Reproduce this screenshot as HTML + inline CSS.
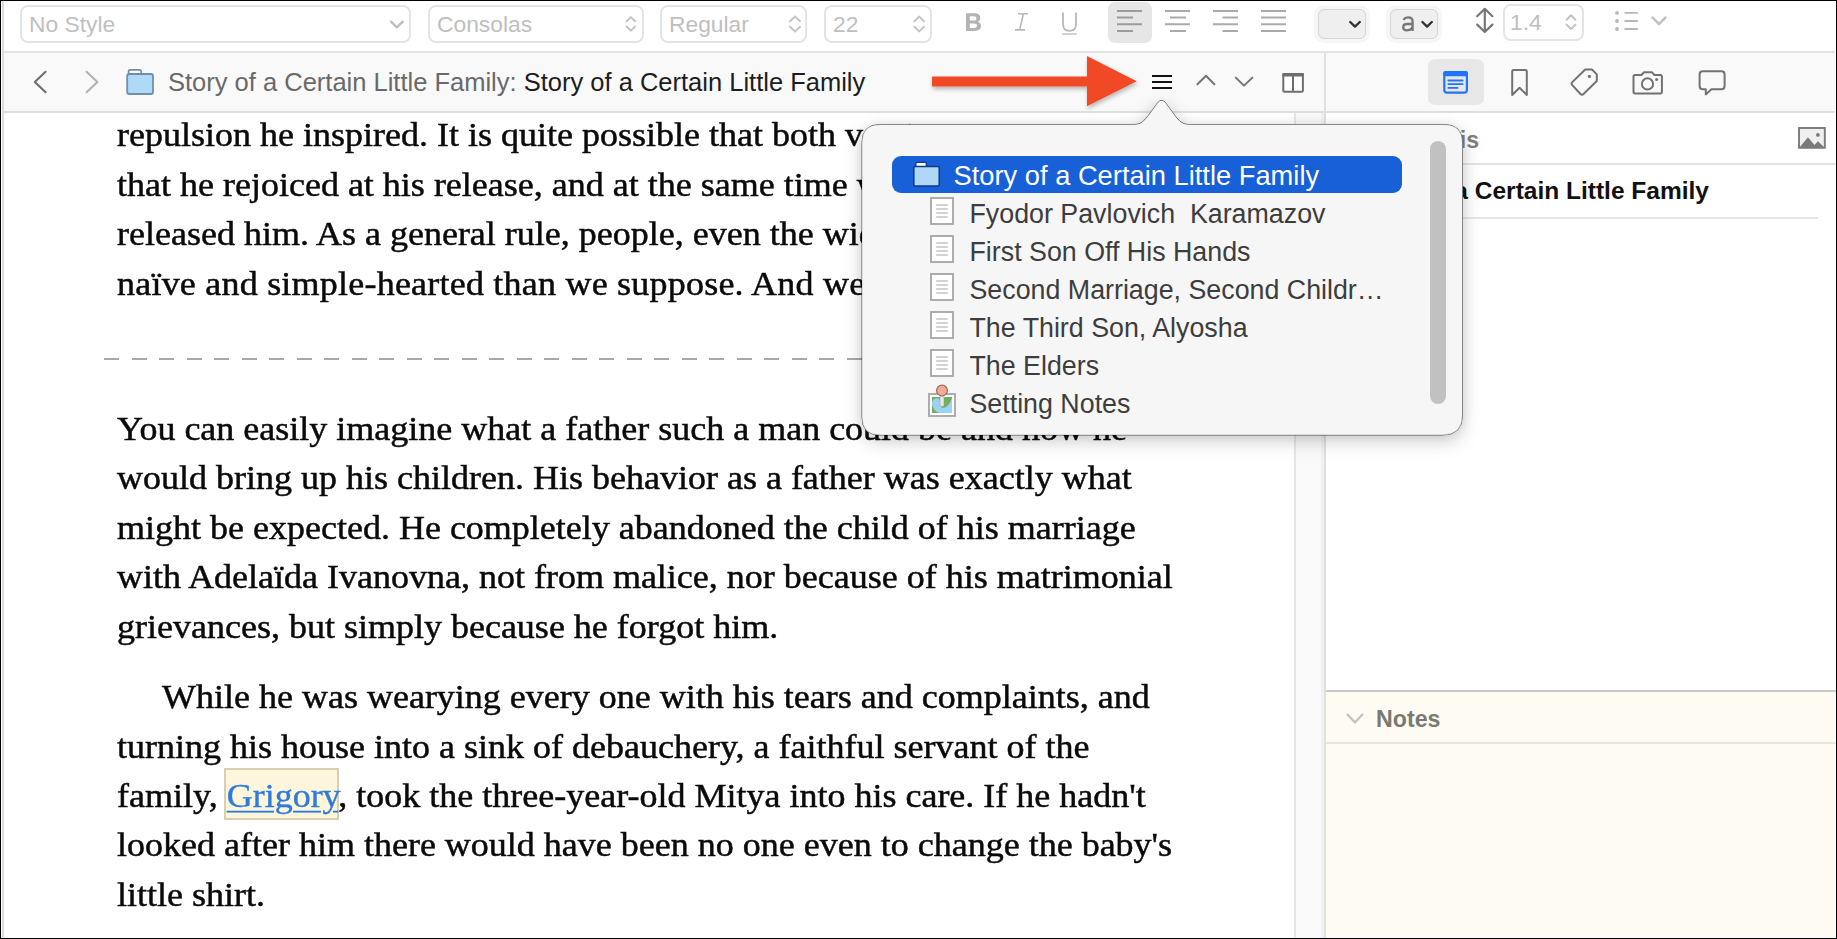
<!DOCTYPE html>
<html><head><meta charset="utf-8"><style>
*{box-sizing:border-box;margin:0;padding:0}
html,body{width:1837px;height:939px;overflow:hidden;background:#000;position:relative;font-family:"Liberation Sans",sans-serif}
.a{position:absolute}
.box{position:absolute;border:2px solid #e4e4e4;border-radius:8px;background:#fff}
.ph{position:absolute;font-size:22.8px;color:#bfbfbf;white-space:pre;line-height:1}
.ln{position:absolute;left:117px;font-family:"Liberation Serif",serif;font-size:36px;color:#0a0a0a;white-space:pre;line-height:1;transform:scaleY(0.93);transform-origin:0 30px;-webkit-text-stroke:0.5px #0a0a0a}
.pi{position:absolute;left:969.5px;font-size:26.8px;color:#3d3d3d;white-space:pre;line-height:1}
svg{position:absolute;overflow:visible;left:0;top:0}
</style></head><body>
<!-- window -->
<div class="a" style="left:1px;top:1px;width:1835px;height:937px;background:#fff"></div>
<div class="a" style="left:2px;top:1px;width:2px;height:937px;background:#dcdcdc"></div>

<!-- ===== TOOLBAR ===== -->
<div class="a" style="left:4px;top:51px;width:1831px;height:2px;background:#e3e3e3"></div>
<div class="box" style="left:20px;top:5px;width:391px;height:38px"></div>
<div class="ph" style="left:29px;top:12.5px">No Style</div>
<div class="box" style="left:428px;top:5px;width:216px;height:38px"></div>
<div class="ph" style="left:437px;top:12.5px">Consolas</div>
<div class="box" style="left:660px;top:5px;width:147px;height:38px"></div>
<div class="ph" style="left:669px;top:12.5px">Regular</div>
<div class="box" style="left:824px;top:5px;width:108px;height:38px"></div>
<div class="ph" style="left:833px;top:12.5px">22</div>
<!-- highlight align-left -->
<div class="a" style="left:1108px;top:2px;width:44px;height:41px;background:#e6e6e6;border-radius:7px"></div>
<!-- colour + 'a' halos -->
<div class="a" style="left:1314px;top:5px;width:56px;height:38px;background:#f6f6f6;border-radius:10px"></div>
<div class="a" style="left:1318px;top:9px;width:48px;height:30px;background:#efefef;border:1.5px solid #d5d5d5;border-radius:6px"></div>
<div class="a" style="left:1386px;top:5px;width:56px;height:38px;background:#f6f6f6;border-radius:10px"></div>
<div class="a" style="left:1390px;top:9px;width:48px;height:30px;background:#efefef;border:1.5px solid #d5d5d5;border-radius:6px"></div>

<div class="box" style="left:1503px;top:3.5px;width:81px;height:37px"></div>
<div class="ph" style="left:1510px;top:10.5px">1.4</div>
<svg width="1837" height="60" style="width:1837px;height:60px">
 <g fill="none" stroke-linecap="round" stroke-linejoin="round">
  <path d="M391 21.6 L396.8 27.4 L402.8 21.6" stroke="#bdbdbd" stroke-width="2.3"/>
  <path d="M626.6 21.2 L630.9 17.1 L635.1 21.2 M626.6 26.5 L630.9 30.6 L635.1 26.5" stroke="#c4c4c4" stroke-width="2"/>
  <path d="M790 21.2 L795 16.6 L800 21.2 M790 26.8 L795 31.4 L800 26.8" stroke="#c4c4c4" stroke-width="2"/>
  <path d="M914.4 21.2 L919.2 16.6 L924 21.2 M914.4 26.8 L919.2 31.4 L924 26.8" stroke="#c4c4c4" stroke-width="2"/>
  <path d="M1566.6 19.8 L1571 15.3 L1575.4 19.8 M1566.6 24.6 L1571 29 L1575.4 24.6" stroke="#c4c4c4" stroke-width="2"/>
  <!-- I -->
  <path d="M1018 13.8 H1028 M1015 29.9 H1025 M1023.3 13.8 L1019.7 29.9" stroke="#b8b8b8" stroke-width="1.6" stroke-linecap="butt"/>
  <!-- U -->
  <path d="M1063 12.4 V24 Q1063 30.8 1069.5 30.8 Q1076 30.8 1076 24 V12.4" stroke="#b8b8b8" stroke-width="1.8" stroke-linecap="butt"/>
  <path d="M1062.2 34 H1076.7" stroke="#c2c2c2" stroke-width="1.5" stroke-linecap="butt"/>
  <!-- align -->
  <path d="M1117 11 H1142 M1117 17.6 H1133 M1117 24.3 H1142 M1117 31 H1133" stroke="#9c9c9c" stroke-width="2" stroke-linecap="butt"/>
  <path d="M1165 11 H1190 M1170 17.6 H1186 M1165 24.3 H1190 M1170 31 H1186" stroke="#aaaaaa" stroke-width="2" stroke-linecap="butt"/>
  <path d="M1213 11 H1238 M1222.5 17.6 H1238 M1213 24.3 H1238 M1222.5 31 H1238" stroke="#aaaaaa" stroke-width="2" stroke-linecap="butt"/>
  <path d="M1261 11 H1286 M1261 17.6 H1286 M1261 24.3 H1286 M1261 31 H1286" stroke="#aaaaaa" stroke-width="2" stroke-linecap="butt"/>
  <!-- dropdown chevrons dark -->
  <path d="M1350.2 22 L1355 26.6 L1359.8 22" stroke="#333" stroke-width="2.4"/>
  <path d="M1422.4 22 L1427.1 26.6 L1431.8 22" stroke="#333" stroke-width="2.4"/>
  <path d="M1403.4 19.8 Q1405 17.4 1407.9 17.4 Q1412.6 17.4 1412.6 21.6 V30.9 M1412.6 24 H1407.2 Q1403.2 24 1403.2 27.3 Q1403.2 30.3 1406.7 30.3 Q1412.6 30.3 1412.6 25.6" stroke="#767676" stroke-width="2.3" stroke-linecap="butt"/>
  <!-- line spacing arrow -->
  <path d="M1484.8 9 V32 M1477.2 16.2 L1484.8 8.8 L1492.4 16.2 M1477.2 24.6 L1484.8 32 L1492.4 24.6" stroke="#777" stroke-width="2.2"/>
  <!-- list -->
  <path d="M1624.5 12.9 H1637.8 M1624.5 21 H1637.8 M1624.5 29 H1637.8" stroke="#b8b8b8" stroke-width="1.8" stroke-linecap="butt"/>
  <path d="M1652.6 17.6 L1659 24 L1665.4 17.6" stroke="#c2c2c2" stroke-width="2.5"/>
 </g>
 <g fill="#b8b8b8"><circle cx="1617" cy="12.9" r="1.9"/><circle cx="1617" cy="21" r="1.9"/><circle cx="1617" cy="29" r="1.9"/></g>
 <!-- B -->
 <path fill="#b4b4b4" fill-rule="evenodd" d="M966 13.2 H974.2 Q980.3 13.2 980.3 17.8 Q980.3 20.9 977.6 21.8 Q981 22.7 981 26.3 Q981 30.9 974.6 30.9 H966 Z M969.8 16.2 V20.6 H973.6 Q976.4 20.6 976.4 18.4 Q976.4 16.2 973.6 16.2 Z M969.8 23.4 V27.9 H974 Q977 27.9 977 25.6 Q977 23.4 974 23.4 Z"/>
</svg>

<!-- ===== NAV BAR ===== -->
<div class="a" style="left:4px;top:53px;width:1831px;height:58px;background:#f9f9f9"></div>
<div class="a" style="left:4px;top:111px;width:1831px;height:2px;background:#dedede"></div>
<div class="a" style="left:168px;top:69.5px;font-size:25.5px;color:#696969;white-space:pre;line-height:1">Story of a Certain Little Family: <span style="color:#1d1d1d">Story of a Certain Little Family</span></div>
<!-- inspector tab highlight -->
<div class="a" style="left:1428px;top:59px;width:56px;height:46px;background:#e7e7e7;border-radius:7px"></div>
<svg width="1837" height="120" style="width:1837px;height:120px">
 <g fill="none" stroke-linecap="round" stroke-linejoin="round">
  <path d="M45.6 71.8 L34.8 81.9 L45.6 92.2" stroke="#6e6e6e" stroke-width="2.1"/>
  <path d="M86.6 71.8 L97.4 81.9 L86.6 92.2" stroke="#b2b2b2" stroke-width="2.1"/>
  <path d="M1197.4 84.2 L1206 75.8 L1214.4 84.2" stroke="#747474" stroke-width="2"/>
  <path d="M1235.8 77.6 L1244 85.6 L1252.4 77.6" stroke="#747474" stroke-width="2"/>
 </g>
 <!-- folder -->
 <path d="M128.6 73.8 V71.5 Q128.6 69.8 130.3 69.8 H139.4 Q141.2 69.8 141.2 71.5 V73.8" fill="#fff" stroke="#6f8fa8" stroke-width="1.7"/>
 <rect x="127.2" y="74" width="25.8" height="20" rx="2" fill="#afd9f6" stroke="#6f8fa8" stroke-width="1.8"/>
 <!-- split -->
 <rect x="1283.3" y="74" width="19.6" height="17.8" rx="1.3" fill="#fff" stroke="#6e6e6e" stroke-width="2"/>
 <rect x="1282.3" y="73" width="21.6" height="3.6" rx="1" fill="#6e6e6e"/>
 <path d="M1293 75 V91" stroke="#6e6e6e" stroke-width="2"/>
 <!-- hamburger -->
 <path d="M1152 76 H1172 M1152 82 H1172 M1152 88 H1172" stroke="#111" stroke-width="2.2"/>
 <!-- synopsis icon -->
 <rect x="1444.3" y="72.1" width="22.6" height="20.6" rx="2.6" fill="none" stroke="#1f74fb" stroke-width="2.2"/>
 <rect x="1443.2" y="71" width="24.8" height="5.2" rx="2" fill="#1f74fb"/>
 <path d="M1448.3 80.5 H1462.7 M1448.3 84.1 H1462.7 M1448.3 87.9 H1457.6" stroke="#1f74fb" stroke-width="1.8" stroke-linecap="round"/>
 <g fill="none" stroke="#727272" stroke-width="2" stroke-linejoin="round" stroke-linecap="round">
  <!-- bookmark -->
  <path d="M1512.2 95 V71.5 Q1512.2 70 1513.7 70 H1525.3 Q1526.8 70 1526.8 71.5 V95 L1519.5 87.8 Z"/>
  <!-- tag -->
  <path d="M1572.3 85.1 Q1570.8 83.6 1572.3 82.1 L1585.2 69.5 H1592 L1596.8 74.4 V81 L1583.5 94 Q1582 95.5 1580.5 94 Z"/>
  <!-- camera -->
  <path d="M1633.5 76.6 Q1633.5 75 1635.1 75 H1641.5 L1643.9 72.3 H1652 L1654.4 75 H1660.3 Q1661.9 75 1661.9 76.6 V91.8 Q1661.9 93.4 1660.3 93.4 H1635.1 Q1633.5 93.4 1633.5 91.8 Z"/>
  <circle cx="1647.5" cy="83.9" r="5.6"/>
  <!-- comment -->
  <path d="M1699.6 74.5 Q1699.6 71.3 1702.8 71.3 H1721.4 Q1724.6 71.3 1724.6 74.5 V86 Q1724.6 89.2 1721.4 89.2 H1711.4 L1705.8 94.4 V89.2 H1702.8 Q1699.6 89.2 1699.6 86 Z"/>
 </g>
 <circle cx="1589.4" cy="76.4" r="1.6" fill="#727272"/>
 <circle cx="1656.6" cy="79.4" r="1.5" fill="#727272"/>
</svg>

<!-- ===== EDITOR ===== -->
<div class="a" style="left:1294px;top:113px;width:30px;height:825px;background:linear-gradient(90deg,#e6e6e6 0 1.5px,#f9f9f9 1.5px 27px,#f1f1f1 27px)"></div>
<div class="a" style="left:1324px;top:53px;width:2px;height:885px;background:#e0e0e0"></div>

<div class="ln" style="top:116px">repulsion he inspired. It is quite possible that both versions were true,</div>
<div class="ln" style="top:165.5px">that he rejoiced at his release, and at the same time wept for her who</div>
<div class="ln" style="top:215px">released him. As a general rule, people, even the wicked, are much more</div>
<div class="ln" style="top:264.5px;letter-spacing:0.22px">naïve and simple-hearted than we suppose. And we ourselves are too.</div>
<div class="a" style="left:104px;top:358px;width:1170px;height:2px;background:repeating-linear-gradient(90deg,#a8a8a8 0 15px,transparent 15px 27.5px)"></div>
<div class="ln" style="top:409.6px">You can easily imagine what a father such a man could be and how he</div>
<div class="ln" style="top:459px">would bring up his children. His behavior as a father was exactly what</div>
<div class="ln" style="top:508.6px">might be expected. He completely abandoned the child of his marriage</div>
<div class="ln" style="top:558px">with Adelaïda Ivanovna, not from malice, nor because of his matrimonial</div>
<div class="ln" style="top:607.6px">grievances, but simply because he forgot him.</div>
<div class="ln" style="top:678px;left:162px">While he was wearying every one with his tears and complaints, and</div>
<div class="ln" style="top:727.5px">turning his house into a sink of debauchery, a faithful servant of the</div>
<div class="a" style="left:224px;top:767.5px;width:115px;height:52px;background:#fdf5dc;border:2px solid #d8cfb3"></div>
<div class="ln" style="top:777px">family, <span style="color:#2f7bd9;-webkit-text-stroke:0.4px #2f7bd9;text-decoration:underline;text-decoration-thickness:1.5px;text-underline-offset:4px">Grigory</span>, took the three-year-old Mitya into his care. If he hadn't</div>
<div class="ln" style="top:826px">looked after him there would have been no one even to change the baby's</div>
<div class="ln" style="top:875.8px">little shirt.</div>

<!-- ===== INSPECTOR ===== -->
<div class="a" style="left:1326px;top:163px;width:510px;height:2px;background:#e3e3e3"></div>
<div class="a" style="left:1376px;top:128.5px;font-size:23.2px;font-weight:bold;color:#7e7e7e;line-height:1">Synopsis</div>
<svg width="1837" height="160" style="width:1837px;height:160px">
 <rect x="1799" y="128" width="25.8" height="19.8" fill="#f0f0f0" stroke="#7a7a7a" stroke-width="1.9"/>
 <path d="M1800 147 L1807.9 137.3 L1814.5 144.9 L1817.9 141.3 L1824 147 Z" fill="#7a7a7a"/>
 <circle cx="1817.9" cy="134.9" r="1.9" fill="#7a7a7a"/>
</svg>
<div class="a" style="left:1355px;top:179px;font-size:24.5px;font-weight:bold;color:#111;line-height:1;white-space:pre">Story of a Certain Little Family</div>
<div class="a" style="left:1347px;top:217px;width:471px;height:2px;background:#e6e6e6"></div>
<div class="a" style="left:1326px;top:690px;width:510px;height:248px;background:#fefcf2"></div>
<div class="a" style="left:1326px;top:690px;width:510px;height:2px;background:#c9c9c9"></div>
<div class="a" style="left:1326px;top:742px;width:510px;height:2px;background:#e6e4dc"></div>
<div class="a" style="left:1376px;top:707.5px;font-size:23.2px;font-weight:bold;color:#797975;line-height:1">Notes</div>
<svg width="1837" height="939" style="width:1837px;height:939px">
 <path d="M1347.5 714.6 L1355 722.4 L1362.4 714.6" fill="none" stroke="#c0c0c0" stroke-width="2.2" stroke-linecap="round" stroke-linejoin="round"/>
</svg>

<!-- ===== POPOVER ===== -->
<svg width="1837" height="939" style="width:1837px;height:939px">
 <defs><filter id="sh" x="-20%" y="-40%" width="140%" height="180%"><feDropShadow in="SourceAlpha" dx="0" dy="6" stdDeviation="9" flood-color="#000" flood-opacity="0.2" result="s1"/><feDropShadow in="SourceAlpha" dx="0" dy="0" stdDeviation="6" flood-color="#000" flood-opacity="0.07" result="s2"/><feMerge><feMergeNode in="s1"/><feMergeNode in="s2"/><feMergeNode in="SourceGraphic"/></feMerge></filter></defs>
 <path filter="url(#sh)" d="M880 124.5 H1134.5 C1141.5 124.5 1145.5 119.5 1149.5 114 L1157.8 102.6 Q1161.6 98.2 1165.4 102.6 L1173.7 114 C1177.7 119.5 1181.7 124.5 1188.7 124.5 H1444 Q1462.5 124.5 1462.5 143 V415 Q1462.5 435 1442.5 435 H880 Q862 435 862 417 V142.5 Q862 124.5 880 124.5 Z" fill="#f6f6f6" stroke="rgba(0,0,0,0.22)" stroke-width="1"/>
 <rect x="892" y="156" width="510" height="37" rx="9" fill="#1760d8"/>
 <!-- folder selected -->
 <path d="M915.8 166 V163.6 Q915.8 162.4 917 162.4 H925.2 Q926.4 162.4 926.4 163.6 V166" fill="#fff" stroke="#0b3a86" stroke-width="1.4"/>
 <rect x="913.8" y="166.4" width="25.4" height="19.6" rx="1.2" fill="#aed8f6" stroke="#0b3a86" stroke-width="1.5"/>
<g transform="translate(0 0)"><rect x="931" y="198" width="22" height="26" fill="#fff" stroke="#a9a9a9" stroke-width="1.9"/><path d="M936.2 205 H947.8 M936.2 209 H947.8 M936.2 213 H947.8 M936.2 217 H947.8" stroke="#c4c4c4" stroke-width="1.7"/></g><g transform="translate(0 38)"><rect x="931" y="198" width="22" height="26" fill="#fff" stroke="#a9a9a9" stroke-width="1.9"/><path d="M936.2 205 H947.8 M936.2 209 H947.8 M936.2 213 H947.8 M936.2 217 H947.8" stroke="#c4c4c4" stroke-width="1.7"/></g><g transform="translate(0 76)"><rect x="931" y="198" width="22" height="26" fill="#fff" stroke="#a9a9a9" stroke-width="1.9"/><path d="M936.2 205 H947.8 M936.2 209 H947.8 M936.2 213 H947.8 M936.2 217 H947.8" stroke="#c4c4c4" stroke-width="1.7"/></g><g transform="translate(0 114)"><rect x="931" y="198" width="22" height="26" fill="#fff" stroke="#a9a9a9" stroke-width="1.9"/><path d="M936.2 205 H947.8 M936.2 209 H947.8 M936.2 213 H947.8 M936.2 217 H947.8" stroke="#c4c4c4" stroke-width="1.7"/></g><g transform="translate(0 152)"><rect x="931" y="198" width="22" height="26" fill="#fff" stroke="#a9a9a9" stroke-width="1.9"/><path d="M936.2 205 H947.8 M936.2 209 H947.8 M936.2 213 H947.8 M936.2 217 H947.8" stroke="#c4c4c4" stroke-width="1.7"/></g>
 <!-- setting notes -->
 <rect x="929" y="394" width="26" height="22" fill="#fff" stroke="#a9a9a9" stroke-width="1.9"/>
 <rect x="932" y="397" width="20" height="16" fill="#6fb05a"/>
 <path d="M932 402 Q934 397.5 938 398.5 Q941 399.5 941 405 Q941 409 945 407.5 Q950 405 952 397.5 V413 H940 Q932 411 932 402 Z" fill="#9dd2f7"/>
 <rect x="940" y="396" width="4" height="10.5" rx="1.5" fill="#e8e8e8" stroke="#9a9a9a" stroke-width=".6"/>
 <circle cx="942" cy="390.6" r="5.4" fill="#f3aa92" stroke="#9c6a62" stroke-width="1.2"/>
 <rect x="1430" y="141" width="16" height="263" rx="8" fill="#c1c1c1"/>
</svg>
<div class="a" style="left:953.5px;top:161.5px;font-size:27.3px;color:#fff;white-space:pre;line-height:1">Story of a Certain Little Family</div>
<div class="pi" style="top:201px">Fyodor Pavlovich  Karamazov</div>
<div class="pi" style="top:239px">First Son Off His Hands</div>
<div class="pi" style="top:277px">Second Marriage, Second Childr…</div>
<div class="pi" style="top:315px">The Third Son, Alyosha</div>
<div class="pi" style="top:353px">The Elders</div>
<div class="pi" style="top:391px">Setting Notes</div>

<!-- red arrow -->
<svg width="1837" height="120" style="width:1837px;height:120px">
 <defs><filter id="ash" x="-10%" y="-30%" width="120%" height="160%"><feDropShadow dx="1" dy="2.5" stdDeviation="2" flood-color="#000" flood-opacity="0.28"/></filter></defs>
 <path filter="url(#ash)" d="M932 76.4 H1087 V56 L1136.8 81.3 L1087 106.3 V86.6 H932 Z" fill="#f14a28"/>
</svg>
</body></html>
